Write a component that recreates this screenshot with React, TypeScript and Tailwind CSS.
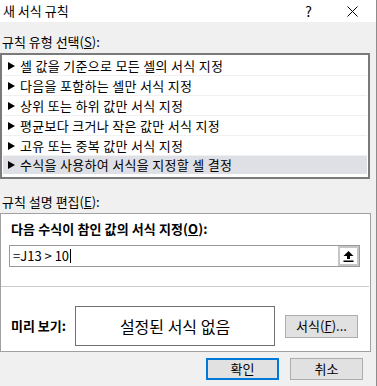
import React from "react";

const rules = [
  "셀 값을 기준으로 모든 셀의 서식 지정",
  "다음을 포함하는 셀만 서식 지정",
  "상위 또는 하위 값만 서식 지정",
  "평균보다 크거나 작은 값만 서식 지정",
  "고유 또는 중복 값만 서식 지정",
  "수식을 사용하여 서식을 지정할 셀 결정",
];

function Arrow() {
  return (
    <svg width="7" height="8" viewBox="0 0 7 8" className="shrink-0">
      <polygon points="0,0 7,4 0,8" fill="#000" />
    </svg>
  );
}

export default function App() {
  return (
    <div className="w-[377px] h-[386px] bg-[#f0f0f0] border-r border-[#8c8c8c] overflow-hidden text-black text-[13px] font-['Noto_Sans_CJK_KR',sans-serif]">
      {/* title bar */}
      <div className="h-[22px] bg-white flex items-center pl-[3px]">
        <span className="leading-[16px]">새 서식 규칙</span>
        <span className="ml-auto leading-[16px] text-[14px]">?</span>
        <svg width="11" height="11" viewBox="0 0 11 11" className="ml-[35px] mr-[18px]">
          <path d="M0.5 0.5L10.5 10.5M10.5 0.5L0.5 10.5" stroke="#000" strokeWidth="1" />
        </svg>
      </div>

      <div className="pt-[12px]">
        <div className="leading-[16px] pl-[2px]">
          규칙 유형 선택(<u>S</u>):
        </div>

        <div className="mt-[3px] w-[370px] h-[126px] border-2 border-[#7a7a7a] bg-white p-[1px]">
          {rules.map((r, i) => (
            <div
              key={r}
              className={
                i === 5
                  ? "h-[20px] flex items-center gap-[5px] pl-[5px] bg-[#dfdfe6] border-b-2 border-white"
                  : "h-[20px] flex items-center gap-[5px] pl-[5px] border-b border-[#f0f0f0]"
              }
            >
              <Arrow />
              <span className="leading-[16px] tracking-[0.3px]">{r}</span>
            </div>
          ))}
        </div>

        <div className="mt-[15px] leading-[16px] pl-[2px]">
          규칙 설명 편집(<u>E</u>):
        </div>

        <div className="mt-[3px] w-[371px] h-[139px] border border-[#a0a0a0] bg-white">
          <div className="pt-[7px] pl-[10px] leading-[16px] font-bold tracking-[0.1px]">
            다음 수식이 참인 값의 서식 지정(<u>O</u>):
          </div>
          <div className="mt-[8px] ml-[8px] w-[351px] h-[22px] border border-[#9a9a9a] flex items-center">
            <span className="pl-[3px] leading-[16px] whitespace-pre">=J13 &gt; 10</span>
            <span className="w-px h-[14px] bg-black ml-[1px]" />
            <div className="ml-auto w-[21px] h-full border-2 border-[#c6c6c6] bg-white flex items-center justify-center">
              <svg width="11" height="11" viewBox="0 0 11 11">
                <polygon points="5.5,0 10.5,5 7,5 7,8 4,8 4,5 0.5,5" fill="#000" />
                <rect x="0.5" y="9.5" width="10" height="1.5" fill="#000" />
              </svg>
            </div>
          </div>

          <div className="mt-[19px] h-px w-[368px] bg-[#cbcbcb]" />

          <div className="mt-[19px] flex items-center pl-[10px]">
            <span className="w-[64px] leading-[16px] font-bold">미리 보기:</span>
            <div className="w-[200px] h-[40px] border border-[#707070] flex items-center justify-center text-[16px]">
              설정된 서식 없음
            </div>
            <button className="ml-[10px] w-[73px] h-[23px] border border-[#adadad] bg-[#e1e1e1] leading-[16px]">
              서식(<u>F</u>)...
            </button>
          </div>
        </div>

        <div className="mt-[6px] flex justify-end gap-[11px] pr-[13px]">
          <button className="w-[73px] h-[22px] border-2 border-[#0078d7] bg-[#e1e1e1] leading-[16px]">
            확인
          </button>
          <button className="w-[73px] h-[22px] border border-[#adadad] bg-[#e1e1e1] leading-[16px]">
            취소
          </button>
        </div>
      </div>
    </div>
  );
}
